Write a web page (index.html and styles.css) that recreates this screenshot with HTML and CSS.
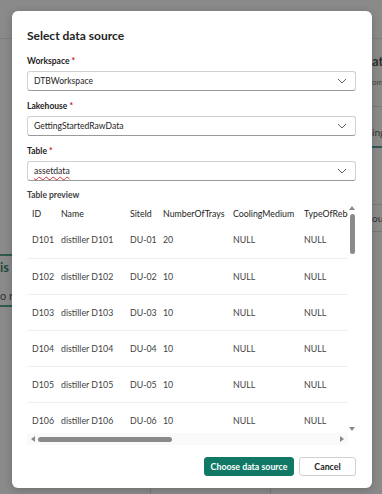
FILE: index.html
```html
<!DOCTYPE html>
<html>
<head>
<meta charset="utf-8">
<link rel="stylesheet" href="styles.css">
</head>
<body>
<div class="backdrop">
  <div class="bg-frag bg-top"></div>
  <div class="bg-frag bg-left-line1"></div>
  <div class="bg-frag bg-left-text1">is</div>
  <div class="bg-frag bg-left-text2">o r</div>
  <div class="bg-frag bg-left-line2"></div>
  <div class="bg-frag bg-right-text1">at</div>
  <div class="bg-frag bg-right-text2">ome</div>
  <div class="bg-frag bg-right-line1"></div>
  <div class="bg-frag bg-right-text3">ing</div>
  <div class="bg-frag bg-right-line2"></div>
  <div class="bg-frag bg-right-text4">ous</div>
  <div class="bg-frag bg-right-line3"></div>
  <div class="bg-frag bg-right-line4"></div>
  <div class="bg-frag bg-bottom1"></div>
  <div class="bg-frag bg-bottom2"></div>

  <div class="dialog">
    <h1 class="title">Select data source</h1>

    <div class="field">
      <label class="label">Workspace <span class="req">*</span></label>
      <div class="select"><span>DTBWorkspace</span><svg class="chev" width="10" height="6" viewBox="0 0 10 6"><path d="M1 1 L5 5 L9 1" fill="none" stroke="#616161" stroke-width="1"/></svg></div>
    </div>
    <div class="field">
      <label class="label">Lakehouse <span class="req">*</span></label>
      <div class="select"><span>GettingStartedRawData</span><svg class="chev" width="10" height="6" viewBox="0 0 10 6"><path d="M1 1 L5 5 L9 1" fill="none" stroke="#616161" stroke-width="1"/></svg></div>
    </div>
    <div class="field">
      <label class="label">Table <span class="req">*</span></label>
      <div class="select"><span class="spell">assetdata</span><svg class="chev" width="10" height="6" viewBox="0 0 10 6"><path d="M1 1 L5 5 L9 1" fill="none" stroke="#616161" stroke-width="1"/></svg></div>
    </div>

    <div class="preview-label">Table preview</div>
    <div class="preview">
      <div class="viewport">
        <table class="grid">
          <colgroup>
            <col class="c1"><col class="c2"><col class="c3"><col class="c4"><col class="c5"><col class="c6">
          </colgroup>
          <thead>
            <tr><th>ID</th><th>Name</th><th>SiteId</th><th>NumberOfTrays</th><th>CoolingMedium</th><th>TypeOfReboiler</th></tr>
          </thead>
          <tbody>
            <tr><td>D101</td><td>distiller D101</td><td>DU-01</td><td>20</td><td>NULL</td><td>NULL</td></tr>
            <tr><td>D102</td><td>distiller D102</td><td>DU-02</td><td>10</td><td>NULL</td><td>NULL</td></tr>
            <tr><td>D103</td><td>distiller D103</td><td>DU-03</td><td>10</td><td>NULL</td><td>NULL</td></tr>
            <tr><td>D104</td><td>distiller D104</td><td>DU-04</td><td>10</td><td>NULL</td><td>NULL</td></tr>
            <tr><td>D105</td><td>distiller D105</td><td>DU-05</td><td>10</td><td>NULL</td><td>NULL</td></tr>
            <tr><td>D106</td><td>distiller D106</td><td>DU-06</td><td>10</td><td>NULL</td><td>NULL</td></tr>
          </tbody>
        </table>
      </div>
      <div class="vscroll">
        <span class="arrow-up"></span>
        <div class="vthumb"></div>
        <span class="arrow-down"></span>
      </div>
      <div class="hscroll">
        <span class="arrow-left"></span>
        <div class="htrack"><div class="hthumb"></div></div>
        <span class="arrow-right"></span>
      </div>
    </div>

    <div class="actions">
      <button class="btn primary">Choose data source</button>
      <button class="btn">Cancel</button>
    </div>
  </div>
</div>
</body>
</html>
```
FILE: styles.css
```css
* { box-sizing: border-box; }
html, body { margin: 0; padding: 0; }
body {
  width: 382px;
  height: 494px;
  overflow: hidden;
  background: #8a8a8a;
  font-family: "Lato", "Liberation Sans", sans-serif;
}
.backdrop {
  position: relative;
  width: 382px;
  height: 494px;
  padding: 11px 10px 0 12px;
  overflow: hidden;
}
.bg-frag { position: absolute; }
.bg-top { left: 0; top: 38px; width: 382px; height: 1px; background: #7e7e7e; }
.bg-left-line1 { left: 0; top: 254px; width: 12px; height: 2px; background: #2f5a4e; }
.bg-left-text1 { left: 0; top: 259px; font-size: 13px; font-weight: 700; color: #1f4a3f; line-height: 16px; }
.bg-left-text2 { left: 0; top: 289px; font-size: 11px; color: #333; line-height: 14px; }
.bg-left-line2 { left: 0; top: 305px; width: 12px; height: 2px; background: #2f5a4e; }
.bg-right-text1 { left: 372px; top: 53px; font-size: 13px; font-weight: 700; color: #2d2d2d; line-height: 16px; }
.bg-right-text2 { left: 372px; top: 77px; font-size: 8px; color: #444; line-height: 10px; }
.bg-right-line1 { left: 372px; top: 106px; width: 10px; height: 1px; background: #7a7a7a; }
.bg-right-text3 { left: 372px; top: 126px; font-size: 10px; color: #333; line-height: 12px; }
.bg-right-line2 { left: 372px; top: 146px; width: 10px; height: 2px; background: #2f5a4e; }
.bg-right-text4 { left: 372px; top: 212px; font-size: 10px; color: #333; line-height: 12px; }
.bg-right-line3 { left: 372px; top: 204px; width: 10px; height: 1px; background: #777; }
.bg-right-line4 { left: 372px; top: 231px; width: 10px; height: 1px; background: #777; }
.bg-bottom1 { left: 150px; top: 488px; width: 1px; height: 6px; background: #7a7a7a; }
.bg-bottom2 { left: 270px; top: 488px; width: 1px; height: 6px; background: #7a7a7a; }

.dialog {
  position: relative;
  width: 360px;
  height: 477px;
  background: #fff;
  border-radius: 6px;
  box-shadow: 0 2px 8px rgba(0,0,0,0.2);
  padding: 17px 16px 0 15px;
  display: flex;
  flex-direction: column;
}
.title {
  margin: 0;
  font-size: 12px;
  font-weight: 700;
  color: #242424;
  line-height: 16px;
  margin-bottom: 10px;
}
.field { display: flex; flex-direction: column; margin-bottom: 8px; }
.label {
  font-size: 8.5px;
  font-weight: 700;
  color: #242424;
  line-height: 14px;
  margin-bottom: 3px;
}
.req { color: #c50f1f; }
.select {
  height: 20px;
  border: 1px solid #d1d1d1;
  border-bottom-color: #9a9a9a;
  border-radius: 3px;
  display: flex;
  align-items: center;
  justify-content: space-between;
  padding: 0 8px 0 6px;
  font-size: 8.6px;
  color: #242424;
}
.spell {
  text-decoration: underline wavy #d13438;
  text-decoration-thickness: 1px;
  text-underline-offset: 2px;
}
.preview-label {
  font-size: 8.5px;
  font-weight: 700;
  color: #424242;
  line-height: 14px;
  margin-top: -1px;
  margin-bottom: 2px;
}
.preview {
  display: grid;
  grid-template-columns: 321px 8px;
  grid-template-rows: 229px 12px;
  width: 329px;
}
.viewport { overflow: hidden; }
.grid {
  border-collapse: collapse;
  table-layout: fixed;
  width: 390px;
  font-size: 8.8px;
}
.c1 { width: 29px; } .c2 { width: 69px; } .c3 { width: 33px; }
.c4 { width: 70px; } .c5 { width: 71px; } .c6 { width: 118px; }
.grid th, .grid td {
  text-align: left;
  padding: 0 0 0 5px;
  white-space: nowrap;
  overflow: hidden;
}
.grid th {
  height: 18px;
  font-weight: 400;
  color: #242424;
}
.grid td {
  height: 36px;
  color: #424242;
  border-top: 1px solid #eeeeee;
}
.grid tbody tr:first-child td { border-top: none; }
.vscroll {
  display: flex;
  flex-direction: column;
  align-items: center;
  padding-top: 2px;
}
.arrow-up {
  width: 0; height: 0;
  border-left: 3px solid transparent;
  border-right: 3px solid transparent;
  border-bottom: 4px solid #8a8a8a;
}
.vthumb {
  margin-top: 4px;
  width: 5px;
  height: 40px;
  background: #8a8a8a;
  border-radius: 3px;
}
.arrow-down {
  margin-top: auto;
  margin-bottom: 2px;
  width: 0; height: 0;
  border-left: 3px solid transparent;
  border-right: 3px solid transparent;
  border-top: 4px solid #8a8a8a;
}
.hscroll {
  display: flex;
  align-items: center;
  padding: 0 4px;
  background: #fafafa;
}
.arrow-left {
  width: 0; height: 0;
  border-top: 3px solid transparent;
  border-bottom: 3px solid transparent;
  border-right: 4px solid #8a8a8a;
}
.htrack { flex: 1; padding: 0 3px; }
.hthumb {
  width: 134px;
  height: 5px;
  border-radius: 3px;
  background: #8a8a8a;
}
.arrow-right {
  width: 0; height: 0;
  border-top: 3px solid transparent;
  border-bottom: 3px solid transparent;
  border-left: 4px solid #8a8a8a;
}
.actions {
  display: flex;
  justify-content: flex-end;
  gap: 5px;
  margin-top: 12px;
}
.btn {
  height: 19px;
  border: 1px solid #d1d1d1;
  border-radius: 3px;
  background: #fff;
  color: #242424;
  font-family: "Lato", "Liberation Sans", sans-serif;
  font-size: 8.8px;
  font-weight: 700;
  padding: 0;
  width: 57px;
}
.btn.primary {
  width: 90px;
  background: #117865;
  border-color: #117865;
  color: #fff;
}
```
